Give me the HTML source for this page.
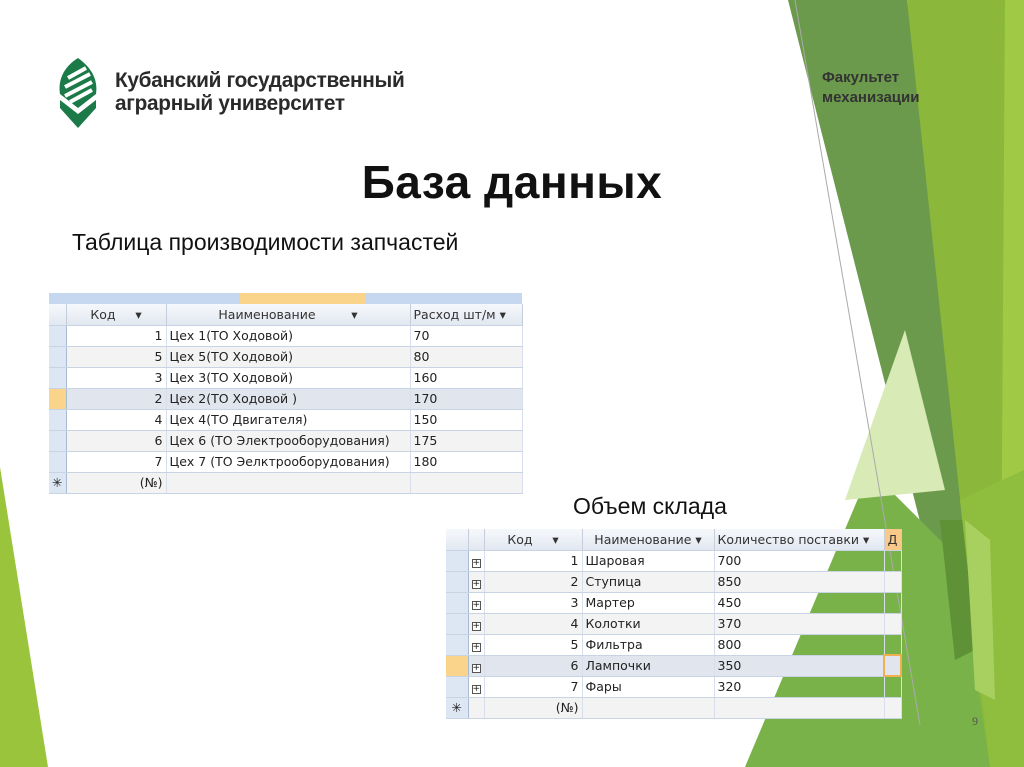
<!DOCTYPE html>
<html><head><meta charset="utf-8"><style>
*{margin:0;padding:0;box-sizing:border-box}
body{width:1024px;height:767px;overflow:hidden;background:#fff;position:relative;font-family:"Liberation Sans","DejaVu Sans",sans-serif}
.abs{position:absolute}
table{border-collapse:collapse;position:absolute;font-family:"DejaVu Sans","Liberation Sans",sans-serif;font-size:12.5px;color:#222;table-layout:fixed}
td{border-bottom:1px solid #c8d3e3;border-right:1px solid #d8dfea;padding:0 3px;white-space:nowrap;overflow:hidden;height:21px}
tr.h td{background:linear-gradient(#f6f8fb,#e2e8f1);color:#333;text-align:center;border-right:1px solid #c5cfdc}
td.s{background:#dde6f3;border-right:1px solid #a9bad3;padding:0}
tr.sel td{background:#e1e5ee}
tr.sel td.s{background:#fbd48c}
tr.alt td{background:#f3f3f3}
tr.alt td.s{background:#dde6f3}
.r{text-align:right}
.pl{display:inline-block;width:9px;height:9px;border:1px solid #555;font-size:9px;line-height:7px;text-align:center;background:#fff}
</style></head><body>
<svg class="abs" style="left:0;top:0" width="1024" height="767">
<polygon points="0,467 0,767 48,767" fill="#9ac43c"/>
<polygon points="907,0 1024,0 1024,767 960,767" fill="#8bb83a"/>
<polygon points="1005,0 1024,0 1024,767 1000,767" fill="#a0ca45"/>
<polygon points="788,0 907,0 975,640 950,640" fill="#6b9a4c"/>
<polygon points="870,470 960,560 990,767 745,767" fill="#7ab24a"/>
<polygon points="905,330 945,490 845,500" fill="#d8eab5"/>
<polygon points="940,520 965,520 975,650 955,660" fill="#5f9236"/>
<polygon points="960,500 1024,470 1024,767 990,767" fill="#8fbd3d"/>
<polygon points="965,520 990,540 995,700 975,690" fill="#a8d060"/>
<line x1="795" y1="0" x2="920" y2="725" stroke="#aaa" stroke-width="1"/>
</svg>
<svg class="abs" style="top:56px;left:56px" width="46" height="74" viewBox="0 0 46 74">
<path d="M22 2 C6 12 2 26 4 38 L22 52 L40 38 C42 24 36 12 22 2Z" fill="#1b7a47"/>
<path d="M12 22 L30 12 M9 31 L34 18 M9 40 L36 26 M14 46 L36 34" stroke="#fff" stroke-width="4"/>
<path d="M4 44 L22 58 L40 44 L40 52 L22 72 L4 52Z" fill="#1b7a47"/>
</svg>
<div class="abs" style="left:115px;top:69px;font-size:20.8px;font-weight:bold;color:#2a2a2a;line-height:23px;letter-spacing:-0.3px">Кубанский государственный<br>аграрный университет</div>
<div class="abs" style="left:822px;top:68px;font-size:15px;font-weight:bold;color:#333;line-height:20px">Факультет<br>механизации</div>
<div class="abs" style="left:0;width:1024px;text-align:center;top:155px;font-size:46px;font-weight:bold;color:#111;letter-spacing:0.5px">База данных</div>
<div class="abs" style="left:72px;top:229px;font-size:23px;color:#111">Таблица производимости запчастей</div>
<div class="abs" style="left:573px;top:493px;font-size:23px;color:#111">Объем склада</div>
<div class="abs" style="left:972px;top:714px;font-size:12px;font-family:'Liberation Serif',serif;color:#555">9</div>

<div class="abs" style="left:49px;top:293px;width:473px;height:11px;background:#c5d8ef"></div>
<div class="abs" style="left:240px;top:293px;width:125px;height:11px;background:#fbd48c"></div>
<table style="left:49px;top:304px;width:473px">
<colgroup><col style="width:17px"><col style="width:100px"><col style="width:244px"><col style="width:112px"></colgroup>
<tr class="h"><td class="s"></td><td>Код &nbsp; &nbsp; ▾</td><td>Наименование &nbsp; &nbsp; &nbsp; &nbsp; ▾</td><td style="text-align:left">Расход шт/м ▾</td></tr>
<tr><td class="s"></td><td class="r">1</td><td>Цех 1(ТО Ходовой)</td><td>70</td></tr>
<tr class="alt"><td class="s"></td><td class="r">5</td><td>Цех 5(ТО Ходовой)</td><td>80</td></tr>
<tr><td class="s"></td><td class="r">3</td><td>Цех 3(ТО Ходовой)</td><td>160</td></tr>
<tr class="sel"><td class="s"></td><td class="r">2</td><td>Цех 2(ТО Ходовой )</td><td>170</td></tr>
<tr><td class="s"></td><td class="r">4</td><td>Цех 4(ТО Двигателя)</td><td>150</td></tr>
<tr class="alt"><td class="s"></td><td class="r">6</td><td>Цех 6 (ТО Электрооборудования)</td><td>175</td></tr>
<tr><td class="s"></td><td class="r">7</td><td>Цех 7 (ТО Эелктрооборудования)</td><td>180</td></tr>
<tr class="alt"><td class="s" style="text-align:center">✳</td><td class="r">(№)</td><td></td><td></td></tr>
</table>

<table style="left:446px;top:529px;width:455px;font-size:12.5px">
<colgroup><col style="width:22px"><col style="width:16px"><col style="width:98px"><col style="width:132px"><col style="width:170px"><col style="width:17px"></colgroup>
<tr class="h"><td class="s"></td><td></td><td>Код &nbsp; &nbsp; ▾</td><td>Наименование ▾</td><td style="text-align:left">Количество поставки ▾</td><td style="background:#f9c98a">Д</td></tr>
<tr><td class="s"></td><td><span class="pl">+</span></td><td class="r">1</td><td>Шаровая</td><td>700</td><td></td></tr>
<tr class="alt"><td class="s"></td><td><span class="pl">+</span></td><td class="r">2</td><td>Ступица</td><td>850</td><td></td></tr>
<tr><td class="s"></td><td><span class="pl">+</span></td><td class="r">3</td><td>Мартер</td><td>450</td><td></td></tr>
<tr class="alt"><td class="s"></td><td><span class="pl">+</span></td><td class="r">4</td><td>Колотки</td><td>370</td><td></td></tr>
<tr><td class="s"></td><td><span class="pl">+</span></td><td class="r">5</td><td>Фильтра</td><td>800</td><td></td></tr>
<tr class="sel"><td class="s"></td><td><span class="pl">+</span></td><td class="r">6</td><td>Лампочки</td><td>350</td><td style="border:2px solid #f0b050"></td></tr>
<tr><td class="s"></td><td><span class="pl">+</span></td><td class="r">7</td><td>Фары</td><td>320</td><td></td></tr>
<tr class="alt"><td class="s" style="text-align:center">✳</td><td></td><td class="r">(№)</td><td></td><td></td><td></td></tr>
</table>
</body></html>
